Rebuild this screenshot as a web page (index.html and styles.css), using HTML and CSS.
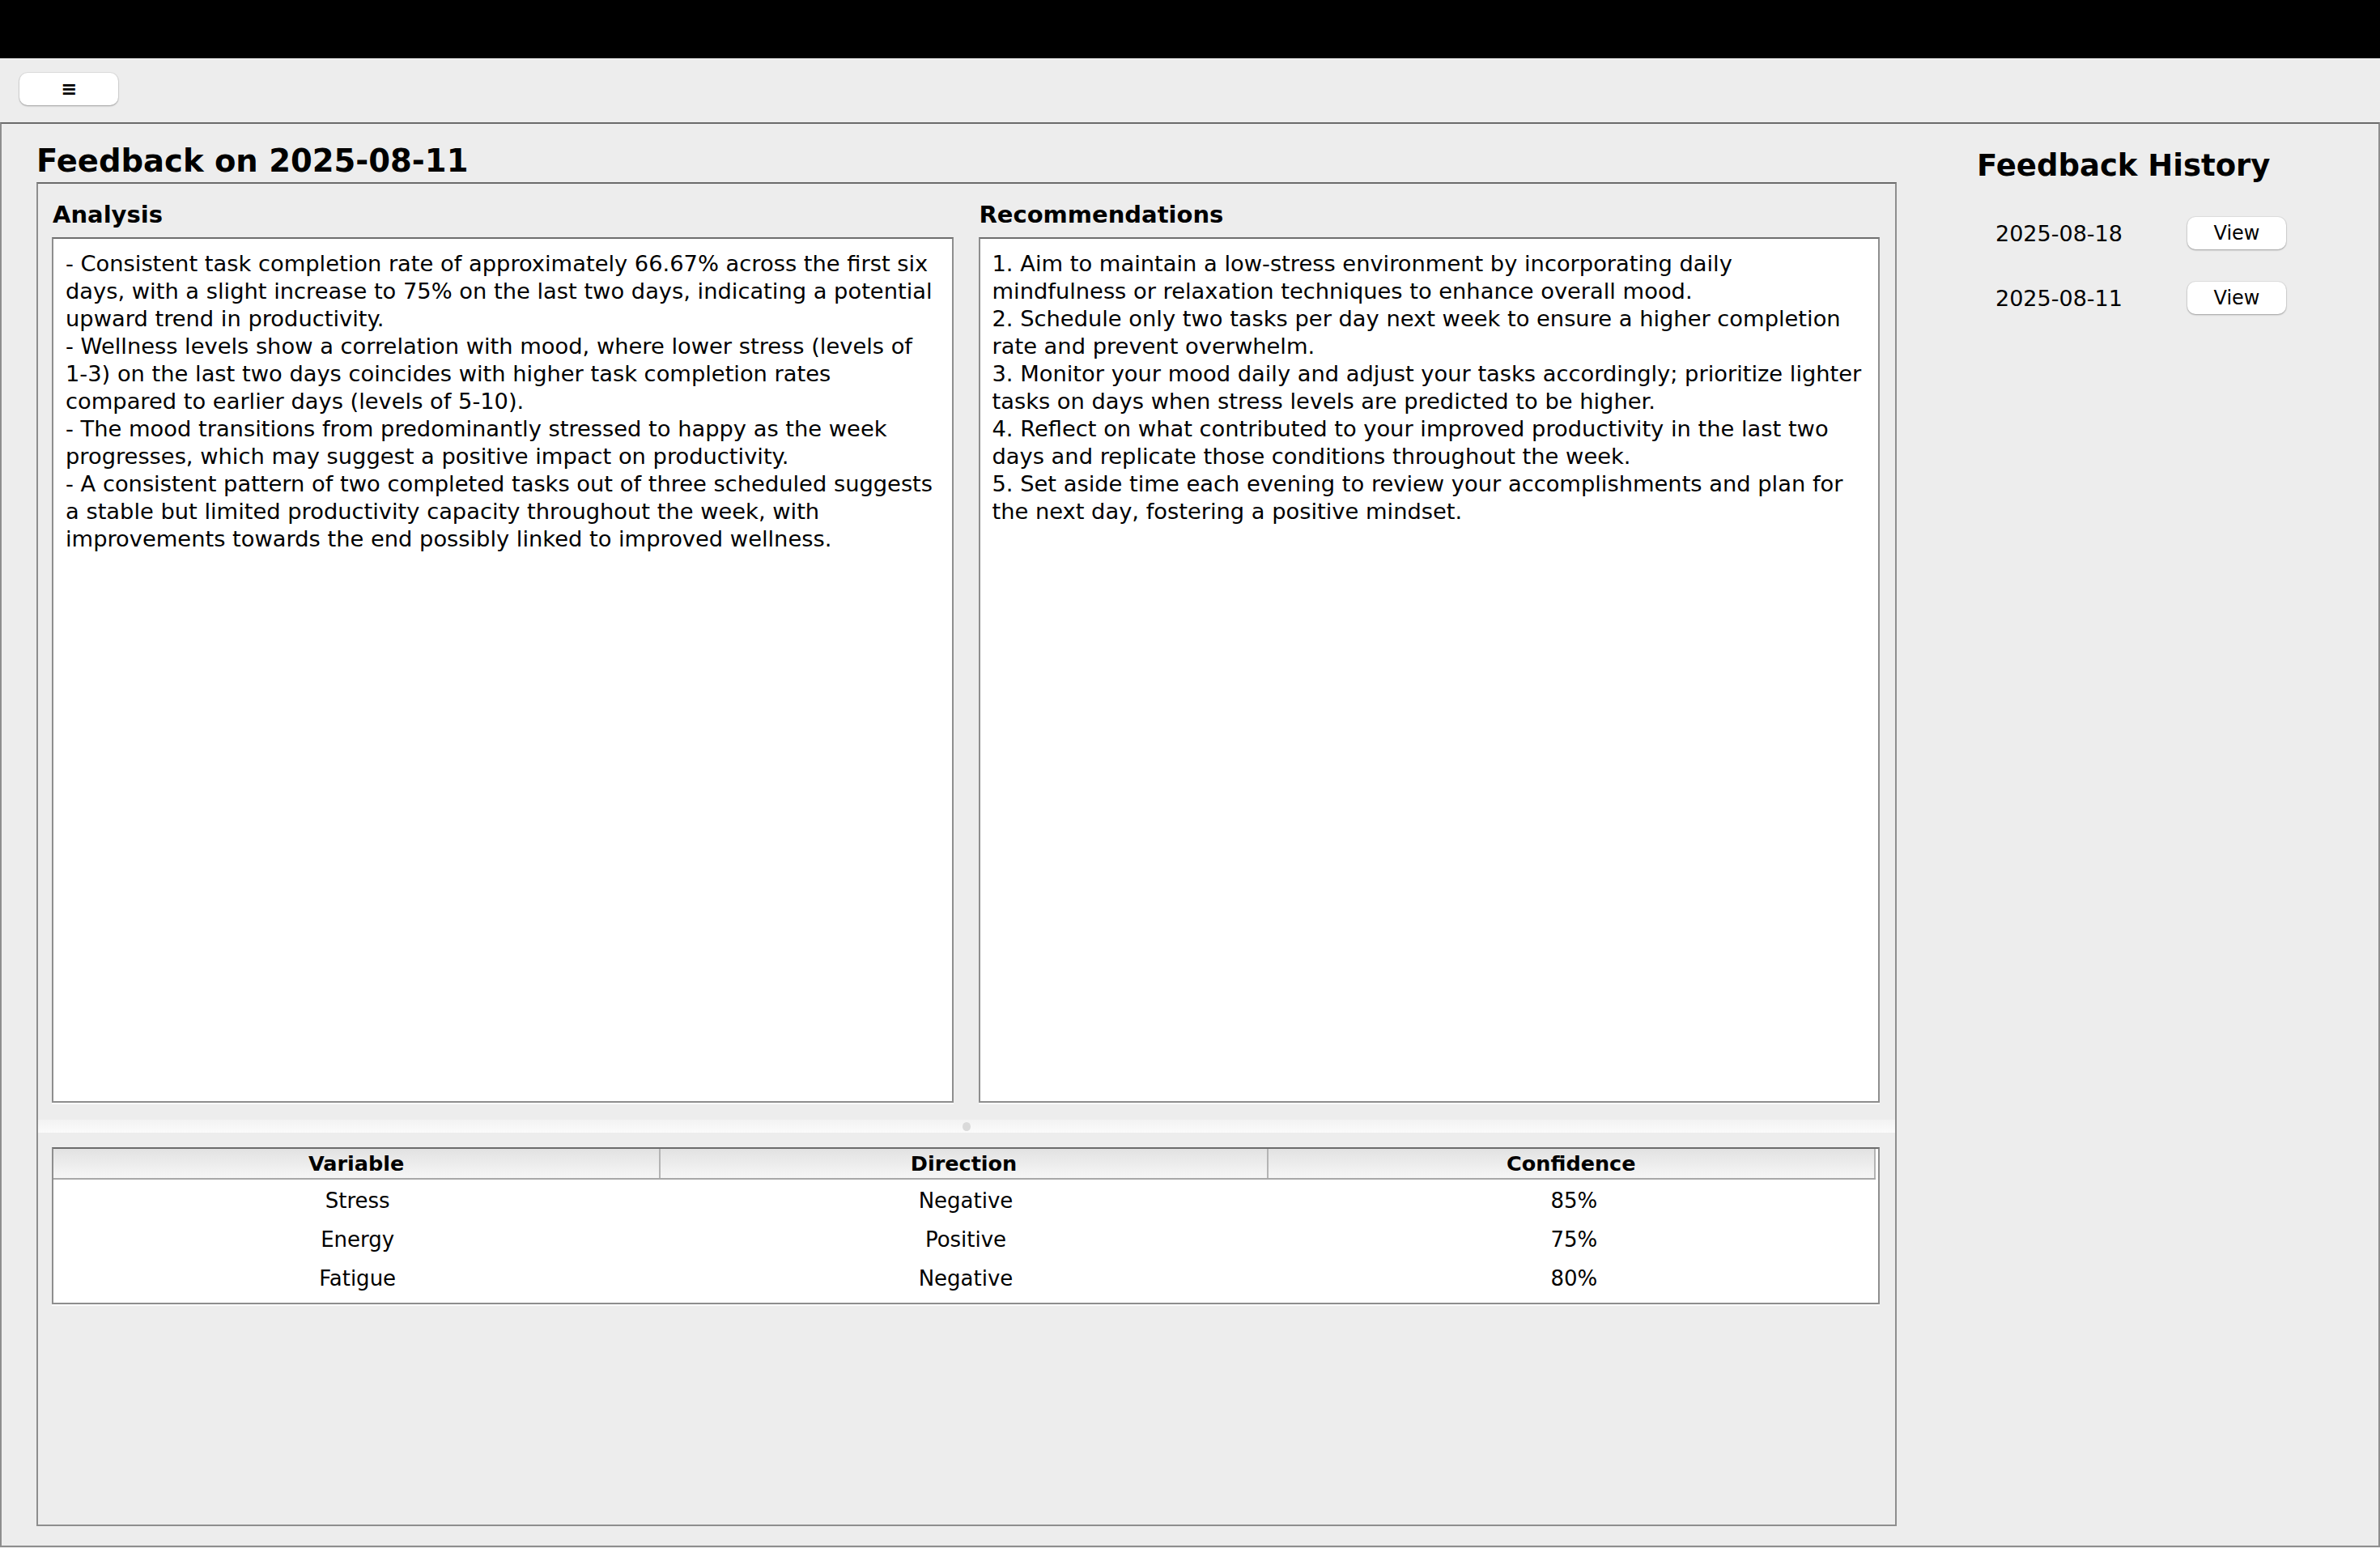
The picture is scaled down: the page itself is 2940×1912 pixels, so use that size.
FILE: index.html
```html
<!DOCTYPE html>
<html lang="en">
<head>
<meta charset="utf-8">
<title>Feedback</title>
<link rel="stylesheet" href="styles.css">
</head>
<body>
<div class="titlebar"></div>
<div class="toolbar"><button class="menu-btn">≡</button></div>
<div class="frame">
  <main class="main">
    <h1 class="page-title">Feedback on 2025-08-11</h1>
    <section class="panel">
      <div class="columns">
        <div class="col">
          <h2 class="col-label">Analysis</h2>
          <div class="textbox"><div class="line">- Consistent task completion rate of approximately 66.67% across the first six</div><div class="line">days, with a slight increase to 75% on the last two days, indicating a potential</div><div class="line">upward trend in productivity.</div><div class="line">- Wellness levels show a correlation with mood, where lower stress (levels of</div><div class="line">1-3) on the last two days coincides with higher task completion rates</div><div class="line">compared to earlier days (levels of 5-10).</div><div class="line">- The mood transitions from predominantly stressed to happy as the week</div><div class="line">progresses, which may suggest a positive impact on productivity.</div><div class="line">- A consistent pattern of two completed tasks out of three scheduled suggests</div><div class="line">a stable but limited productivity capacity throughout the week, with</div><div class="line">improvements towards the end possibly linked to improved wellness.</div></div>
        </div>
        <div class="col">
          <h2 class="col-label">Recommendations</h2>
          <div class="textbox"><div class="line">1. Aim to maintain a low-stress environment by incorporating daily</div><div class="line">mindfulness or relaxation techniques to enhance overall mood.</div><div class="line">2. Schedule only two tasks per day next week to ensure a higher completion</div><div class="line">rate and prevent overwhelm.</div><div class="line">3. Monitor your mood daily and adjust your tasks accordingly; prioritize lighter</div><div class="line">tasks on days when stress levels are predicted to be higher.</div><div class="line">4. Reflect on what contributed to your improved productivity in the last two</div><div class="line">days and replicate those conditions throughout the week.</div><div class="line">5. Set aside time each evening to review your accomplishments and plan for</div><div class="line">the next day, fostering a positive mindset.</div></div>
        </div>
      </div>
      <div class="splitter"><span class="grip"></span></div>
      <div class="table">
        <div class="thead">
          <div class="th">Variable</div>
          <div class="th">Direction</div>
          <div class="th">Confidence</div>
        </div>
        <div class="tbody">
          <div class="tr"><div class="td">Stress</div><div class="td">Negative</div><div class="td">85%</div></div>
          <div class="tr"><div class="td">Energy</div><div class="td">Positive</div><div class="td">75%</div></div>
          <div class="tr"><div class="td">Fatigue</div><div class="td">Negative</div><div class="td">80%</div></div>
        </div>
      </div>
    </section>
  </main>
  <aside class="history">
    <h2 class="history-title">Feedback History</h2>
    <ul class="history-list">
      <li class="history-row"><span class="history-date">2025-08-18</span><button class="view-btn">View</button></li>
      <li class="history-row"><span class="history-date">2025-08-11</span><button class="view-btn">View</button></li>
    </ul>
  </aside>
</div>
</body>
</html>
```
FILE: styles.css
```css
* { box-sizing: border-box; }
html, body { margin: 0; padding: 0; }
body {
  width: 2940px;
  height: 1912px;
  overflow: hidden;
  background: #ededed;
  color: #000;
  font-family: "DejaVu Sans", "Liberation Sans", sans-serif;
}
.titlebar { height: 72px; background: #000; }
.toolbar { height: 79px; padding: 18px 0 0 24px; }
.menu-btn {
  display: flex;
  align-items: center;
  justify-content: center;
  width: 122px;
  height: 40px;
  padding: 0;
  border: none;
  border-radius: 10px;
  background: #fff;
  box-shadow: 0 1px 2px rgba(0,0,0,0.3), 0 0 0 1px rgba(0,0,0,0.05);
  font-family: "DejaVu Sans", sans-serif;
  font-weight: bold;
  font-size: 24px;
  color: #000;
}
.frame {
  display: flex;
  height: 1760px;
  border: 2px solid #8e8e8e;
  border-top-color: #6b6b6b;
}
.main { width: 2341px; padding-left: 43px; }
.page-title {
  margin: 22px 0 2px;
  font-size: 38.5px;
  line-height: 48px;
  font-weight: bold;
}
.panel {
  height: 1660px;
  border: 2px solid #8e8e8e;
  border-top-color: #6b6b6b;
}
.columns {
  display: grid;
  grid-template-columns: 1fr 1fr;
  column-gap: 31px;
  padding: 21px 19px 0 17px;
}
.col-label {
  margin: 0 0 11px;
  padding-left: 1px;
  font-size: 29px;
  line-height: 34px;
  font-weight: bold;
}
.textbox {
  height: 1069px;
  overflow: hidden;
  padding: 14px 15px;
  background: #fff;
  border: 2px solid #8e8e8e;
  border-top-color: #6e6e6e;
  box-shadow: 0 2px 0 #fafafa;
  font-size: 27.3px;
  line-height: 34px;
}
.line { white-space: pre; }
.splitter {
  display: flex;
  align-items: center;
  justify-content: center;
  height: 16px;
  margin-top: 21px;
  background: linear-gradient(#f3f3f3, #fbfbfb);
}
.grip { width: 10px; height: 11px; border-radius: 50%; background: #dadada; }
.table {
  margin: 18px 19px 0 17px;
  background: #fff;
  border: 2px solid #8e8e8e;
  border-top-color: #6b6b6b;
  box-shadow: 0 2px 0 #fafafa;
}
.thead {
  display: grid;
  grid-template-columns: repeat(3, 1fr);
  height: 38px;
  margin-right: 3px;
  background: linear-gradient(#e2e2e2, #f6f6f6);
  border-bottom: 2px solid #a8a8a8;
}
.th {
  padding-top: 1px;
  border-right: 2px solid #b4b4b4;
  font-size: 25.5px;
  line-height: 35px;
  font-weight: bold;
  text-align: center;
}
.tbody { padding: 2px 0 6px; }
.tr { display: grid; grid-template-columns: repeat(3, 1fr); height: 48px; }
.td { font-size: 26px; line-height: 48px; text-align: center; }
.history { flex: 1; padding: 30px 0 0 99px; }
.history-title {
  margin: 0 0 41px;
  font-size: 37px;
  line-height: 44px;
  font-weight: bold;
}
.history-list {
  display: flex;
  flex-direction: column;
  gap: 40px;
  margin: 0;
  padding: 0 0 0 23px;
  list-style: none;
}
.history-row { display: flex; align-items: center; height: 40px; }
.history-date { width: 237px; font-size: 27px; }
.view-btn {
  width: 122px;
  height: 40px;
  padding: 0;
  border: none;
  border-radius: 10px;
  background: #fff;
  box-shadow: 0 1px 2px rgba(0,0,0,0.3), 0 0 0 1px rgba(0,0,0,0.05);
  font-family: "DejaVu Sans", sans-serif;
  font-size: 24px;
  color: #000;
}
```
